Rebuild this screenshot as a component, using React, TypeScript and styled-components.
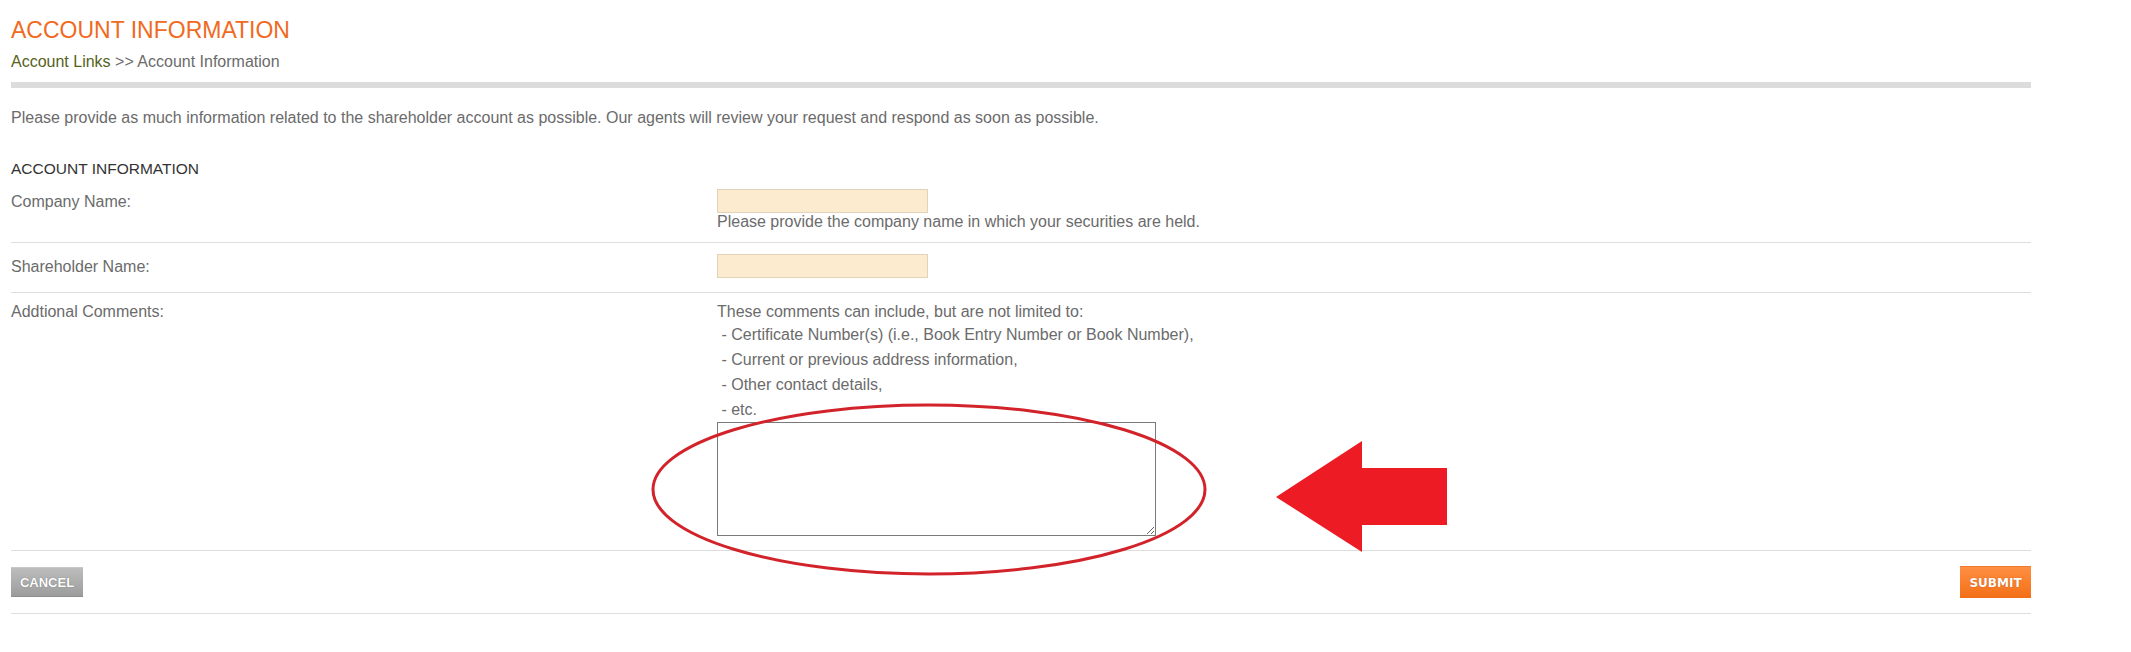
import React from "react";
import styled, { createGlobalStyle } from "styled-components";

const GlobalStyle = createGlobalStyle`
  html, body {
    margin: 0;
    padding: 0;
    background: #ffffff;
  }
  body {
    font-family: "Liberation Sans", Arial, sans-serif;
    font-size: 16px;
    color: #6b6b6b;
  }
`;

const Page = styled.div`
  width: 2020px;
  padding: 17px 0 40px 11px;
`;

const Title = styled.h1`
  margin: 0;
  font-size: 23px;
  line-height: 26px;
  font-weight: normal;
  color: #f06a22;
`;

const Breadcrumb = styled.div`
  margin-top: 9px;
  font-size: 16px;
  line-height: 20px;
  color: #6b6b6b;
`;

const CrumbLink = styled.a`
  color: #56621a;
  text-decoration: none;
`;

const Bar = styled.div`
  margin-top: 10px;
  height: 6px;
  background: #dcdcdc;
`;

const Intro = styled.p`
  margin: 20px 0 0;
  line-height: 20px;
`;

const SectionHeading = styled.h2`
  margin: 31px 0 0;
  font-size: 15.5px;
  line-height: 19px;
  font-weight: normal;
  color: #333333;
`;

const Row = styled.div<{ $top: number; $bottom: number }>`
  display: grid;
  grid-template-columns: 706px 1fr;
  padding: ${(p) => p.$top}px 0 ${(p) => p.$bottom}px;
  border-bottom: 1px solid #dddddd;
`;

const Label = styled.label<{ $lh: number }>`
  line-height: ${(p) => p.$lh}px;
`;

const Field = styled.div`
  display: flex;
  flex-direction: column;
  align-items: flex-start;
`;

const TextInput = styled.input`
  box-sizing: border-box;
  width: 211px;
  height: 24px;
  margin: 0;
  padding: 2px 4px;
  border: 1px solid #e2d2b7;
  background: #fdebcf;
  font: inherit;
  outline: none;
`;

const Help = styled.div`
  line-height: 18px;
`;

const NoteLead = styled.div`
  line-height: 20px;
`;

const NoteItem = styled.div`
  line-height: 25px;
`;

const AreaWrap = styled.div`
  position: relative;
`;

const TextArea = styled.textarea`
  display: block;
  box-sizing: border-box;
  width: 439px;
  height: 114px;
  margin: 0;
  padding: 2px;
  border: 1px solid #7a7a7a;
  background: #ffffff;
  font: inherit;
  resize: both;
  outline: none;
`;

const Annotation = styled.svg`
  position: absolute;
  left: -70px;
  top: -22px;
  width: 805px;
  height: 185px;
  overflow: visible;
  pointer-events: none;
`;

const Actions = styled.div`
  display: flex;
  justify-content: space-between;
  align-items: center;
  padding: 15px 0;
  border-bottom: 1px solid #dddddd;
`;

const Button = styled.button<{ $variant: "cancel" | "submit" }>`
  box-sizing: border-box;
  margin: 0;
  border: none;
  cursor: pointer;
  color: #ffffff;
  font-weight: bold;
  text-transform: uppercase;
  ${(p) =>
    p.$variant === "cancel"
      ? `
    height: 30px;
    width: 72px;
    padding: 0;
    font-family: "Liberation Sans", Arial, sans-serif;
    font-size: 13px;
    background: linear-gradient(#bdbdbd, #9c9c9c);
    border-top: 1px solid #c8c8c8;
    border-bottom: 1px solid #8d8d8d;
    text-shadow: 0 0 1px rgba(0, 0, 0, 0.45);
  `
      : `
    height: 32px;
    width: 71px;
    padding: 0;
    font-family: "DejaVu Sans", Verdana, sans-serif;
    font-size: 12px;
    background: linear-gradient(#ff8f42, #f36f17);
    border-top: 1px solid #f27a2c;
    text-shadow: 0 0 1px rgba(120, 40, 0, 0.6);
  `}
`;

export default function App() {
  return (
    <>
      <GlobalStyle />
      <Page>
        <Title>ACCOUNT INFORMATION</Title>
        <Breadcrumb>
          <CrumbLink href="#">Account Links</CrumbLink> &gt;&gt; Account Information
        </Breadcrumb>
        <Bar />
        <Intro>
          Please provide as much information related to the shareholder account as possible. Our
          agents will review your request and respond as soon as possible.
        </Intro>
        <SectionHeading>ACCOUNT INFORMATION</SectionHeading>

        <Row $top={11} $bottom={11}>
          <Label $lh={26}>Company Name:</Label>
          <Field>
            <TextInput type="text" />
            <Help>Please provide the company name in which your securities are held.</Help>
          </Field>
        </Row>

        <Row $top={11} $bottom={12}>
          <Label $lh={26}>Shareholder Name:</Label>
          <Field>
            <TextInput type="text" />
          </Field>
        </Row>

        <Row $top={9} $bottom={14}>
          <Label $lh={20}>Addtional Comments:</Label>
          <Field>
            <NoteLead>These comments can include, but are not limited to:</NoteLead>
            <NoteItem>{"\u00a0- Certificate Number(s) (i.e., Book Entry Number or Book Number),"}</NoteItem>
            <NoteItem>{"\u00a0- Current or previous address information,"}</NoteItem>
            <NoteItem>{"\u00a0- Other contact details,"}</NoteItem>
            <NoteItem>{"\u00a0- etc."}</NoteItem>
            <AreaWrap>
              <TextArea />
              <Annotation viewBox="0 0 805 185" aria-hidden="true">
                <ellipse
                  cx="282"
                  cy="89.5"
                  rx="276"
                  ry="84.5"
                  fill="none"
                  stroke="#d2232a"
                  strokeWidth="3"
                />
                <polygon
                  points="629,97 715,41 715,68 800,68 800,125 715,125 715,152"
                  fill="#ed1c24"
                />
              </Annotation>
            </AreaWrap>
          </Field>
        </Row>

        <Actions>
          <Button $variant="cancel" type="button">Cancel</Button>
          <Button $variant="submit" type="button">Submit</Button>
        </Actions>
      </Page>
    </>
  );
}
